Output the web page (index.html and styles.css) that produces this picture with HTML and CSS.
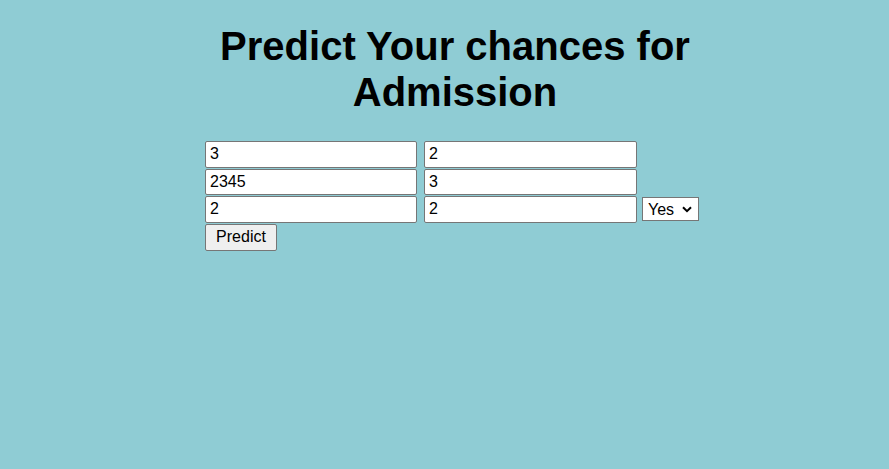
FILE: index.html
```html
<!DOCTYPE html>
<html lang="en">
<head>
<meta charset="utf-8">
<title>Predict Your chances for Admission</title>
<link rel="stylesheet" href="styles.css">
</head>
<body>
<div class="login">
  <h1 class="title">Predict Your chances for Admission</h1>
  <form class="form">
    <div class="row">
      <input class="field" type="text" value="3">
      <input class="field field-b" type="text" value="2">
    </div>
    <div class="row">
      <input class="field" type="text" value="2345">
      <input class="field field-b" type="text" value="3">
    </div>
    <div class="row">
      <input class="field" type="text" value="2">
      <input class="field field-b" type="text" value="2">
      <span class="select-wrap">
        <select class="choice">
          <option>Yes</option>
          <option>No</option>
        </select>
        <svg class="chev" width="10" height="7" viewBox="0 0 10 7" aria-hidden="true">
          <path d="M1 1.2 L5 5.2 L9 1.2" fill="none" stroke="#000" stroke-width="2"/>
        </svg>
      </span>
    </div>
    <div class="row">
      <button class="btn" type="button">Predict</button>
    </div>
  </form>
</div>
</body>
</html>
```

FILE: styles.css
```css
html, body {
  margin: 0;
  padding: 0;
}
body {
  background: #8fccd4;
  font-family: "Liberation Sans", Arial, sans-serif;
  color: #000;
  min-height: 469px;
}
.login {
  width: 500px;
  margin-left: 205px;
  padding-top: 23px;
}
.title {
  margin: 0;
  font-size: 40px;
  font-weight: bold;
  line-height: 46px;
  text-align: center;
}
.form {
  margin-top: 26px;
  display: flex;
  flex-direction: column;
  gap: 1px;
}
.row {
  display: flex;
  align-items: center;
}
.field {
  box-sizing: border-box;
  width: 212px;
  height: 26.5px;
  margin: 0;
  padding: 1px 4px;
  font-family: "Liberation Sans", Arial, sans-serif;
  font-size: 16px;
  color: #000;
  background: #fff;
  border: 1px solid #767676;
  border-radius: 2px;
}
.field-b {
  margin-left: 7px;
  width: 213px;
}
.select-wrap {
  position: relative;
  display: inline-flex;
  margin-left: 5px;
}
.choice {
  -webkit-appearance: none;
  appearance: none;
  box-sizing: border-box;
  margin: 0;
  height: 24px;
  width: 57px;
  padding: 0 0 0 5px;
  font-family: "Liberation Sans", Arial, sans-serif;
  font-size: 16px;
  color: #000;
  background: #fff;
  border: 1px solid #767676;
  border-radius: 0;
}
.chev {
  position: absolute;
  left: 40px;
  top: 9px;
  pointer-events: none;
}
.btn {
  box-sizing: border-box;
  width: 72px;
  height: 27px;
  margin: 0;
  padding: 1px 6px;
  font-family: "Liberation Sans", Arial, sans-serif;
  font-size: 16px;
  color: #000;
  background: #efefef;
  border: 1px solid #767676;
  border-radius: 2px;
}
```
